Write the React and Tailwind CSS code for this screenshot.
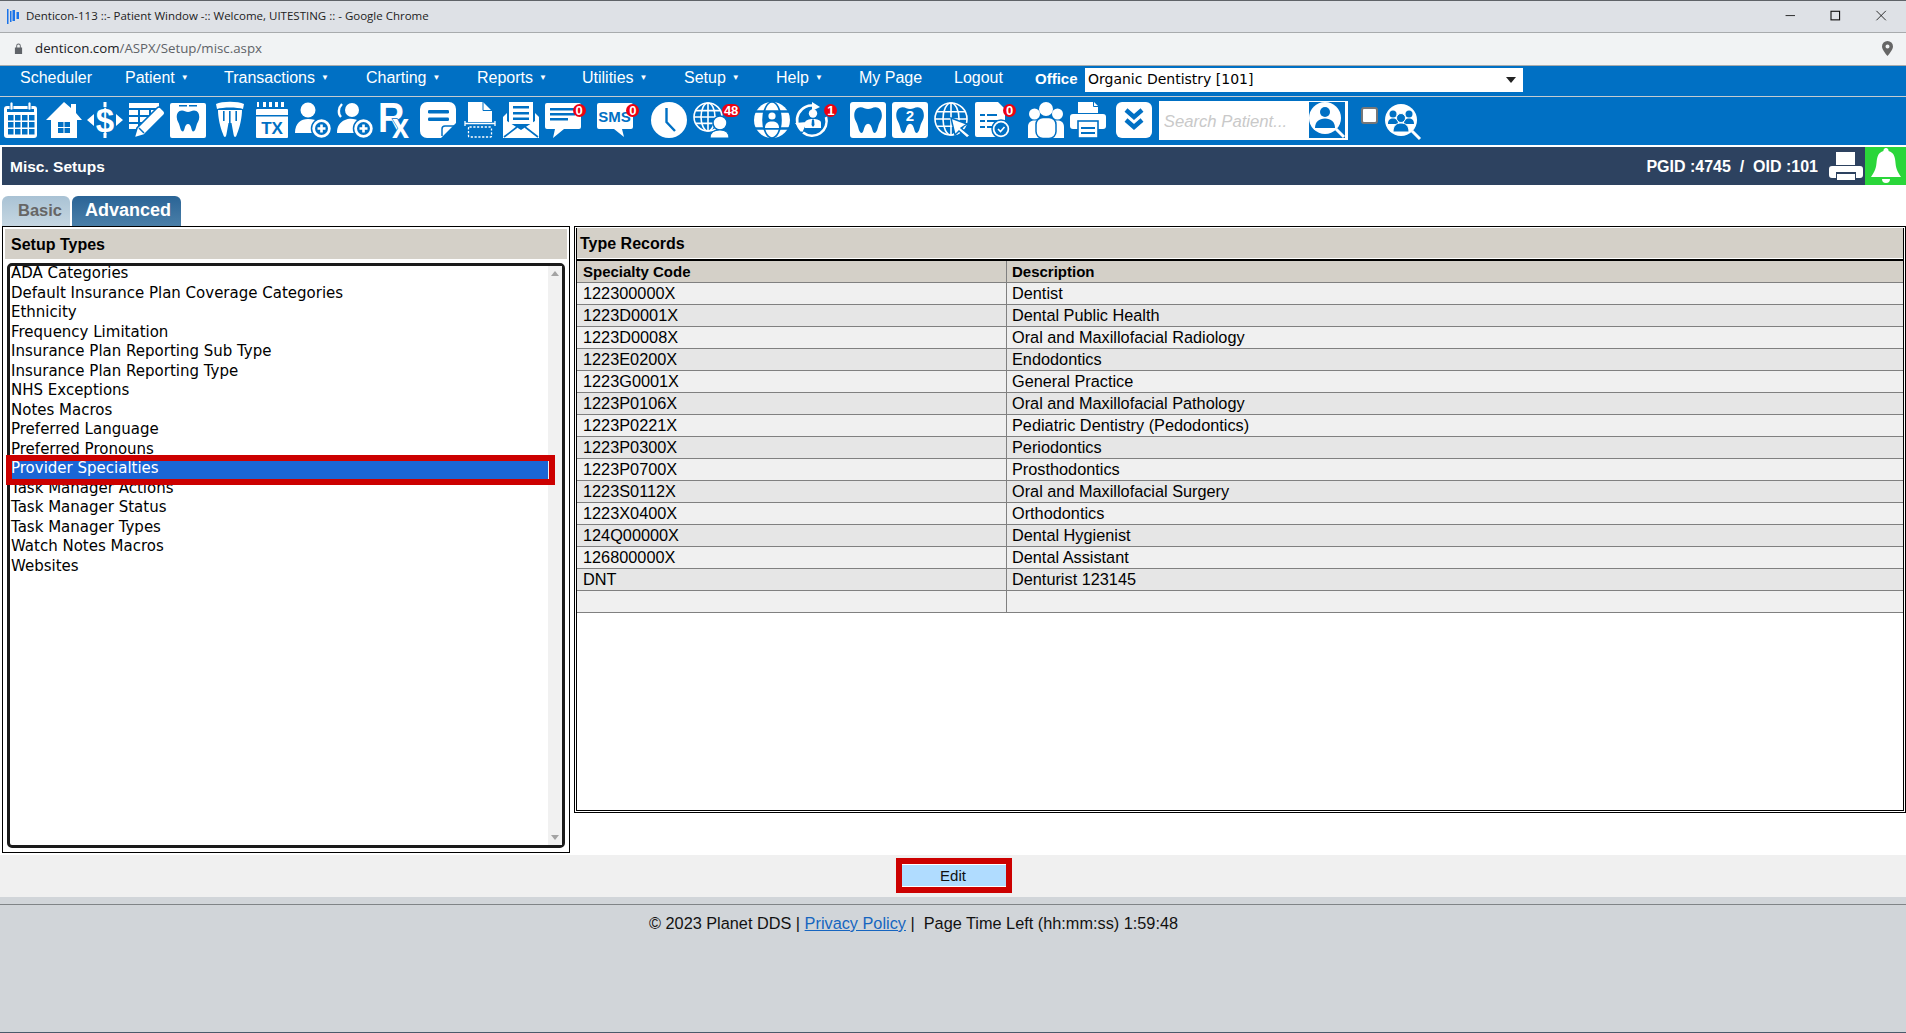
import { Fragment } from 'react'

const B = '#0070c4'
const SANS = { fontFamily: 'Liberation Sans, sans-serif' }
const TOOTH = 'M10 4C13 4 15 6 18 6C21 6 23 4 26 4C31 4 33 8 33 13C33 18 30 20 29 25C28 29 27 32 25 32C22 32 23 22 18 22C13 22 14 32 11 32C9 32 8 29 7 25C6 20 3 18 3 13C3 8 5 4 10 4Z'

const menu = [
  { label: 'Scheduler', w: 'w-[105px]' },
  { label: 'Patient', w: 'w-[99px]', arrow: true },
  { label: 'Transactions', w: 'w-[142px]', arrow: true },
  { label: 'Charting', w: 'w-[111px]', arrow: true },
  { label: 'Reports', w: 'w-[105px]', arrow: true },
  { label: 'Utilities', w: 'w-[102px]', arrow: true },
  { label: 'Setup', w: 'w-[92px]', arrow: true },
  { label: 'Help', w: 'w-[83px]', arrow: true },
  { label: 'My Page', w: 'w-[95px]' },
  { label: 'Logout', w: 'w-[81px]' },
]

const setupTypes = [
  'ADA Categories',
  'Default Insurance Plan Coverage Categories',
  'Ethnicity',
  'Frequency Limitation',
  'Insurance Plan Reporting Sub Type',
  'Insurance Plan Reporting Type',
  'NHS Exceptions',
  'Notes Macros',
  'Preferred Language',
  'Preferred Pronouns',
  'Provider Specialties',
  'Task Manager Actions',
  'Task Manager Status',
  'Task Manager Types',
  'Watch Notes Macros',
  'Websites',
]

const records = [
  ['122300000X', 'Dentist'],
  ['1223D0001X', 'Dental Public Health'],
  ['1223D0008X', 'Oral and Maxillofacial Radiology'],
  ['1223E0200X', 'Endodontics'],
  ['1223G0001X', 'General Practice'],
  ['1223P0106X', 'Oral and Maxillofacial Pathology'],
  ['1223P0221X', 'Pediatric Dentistry (Pedodontics)'],
  ['1223P0300X', 'Periodontics'],
  ['1223P0700X', 'Prosthodontics'],
  ['1223S0112X', 'Oral and Maxillofacial Surgery'],
  ['1223X0400X', 'Orthodontics'],
  ['124Q00000X', 'Dental Hygienist'],
  ['126800000X', 'Dental Assistant'],
  ['DNT', 'Denturist 123145'],
  ['\u00a0', '\u00a0'],
]

function Svg({ children }) {
  return <svg viewBox="0 0 36 36" className="w-9 h-9 overflow-visible" fill="#fff">{children}</svg>
}

function Tool({ className = '', badge, badgeClass = '', children }) {
  return (
    <div className={`relative w-9 h-9 shrink-0 ${className}`}>
      <Svg>{children}</Svg>
      {badge && (
        <span className={`absolute top-[2px] h-[13px] min-w-[13px] px-[2px] rounded-full bg-[#ee0010] text-white text-[13px] leading-[13px] font-bold text-center font-['Liberation_Sans',sans-serif] ${badgeClass}`}>
          {badge}
        </span>
      )}
    </div>
  )
}

function Globe({ cx = 15, cy = 15, r = 14 }) {
  return (
    <g fill="none" stroke="#fff" strokeWidth="1.6">
      <circle cx={cx} cy={cy} r={r} />
      <ellipse cx={cx} cy={cy} rx={r / 2} ry={r} />
      <path d={`M${cx} ${cy - r}V${cy + r}M${cx - r + 2} ${cy - r / 2.2}H${cx + r - 2}M${cx - r} ${cy}H${cx + r}M${cx - r + 2} ${cy + r / 2.2}H${cx + r - 2}`} />
    </g>
  )
}

function PlusBadge() {
  return (
    <g>
      <circle cx="26.5" cy="26.5" r="10" fill="#fff" stroke={B} strokeWidth="1.5" />
      <circle cx="26.5" cy="26.5" r="6.5" fill={B} />
      <path d="M25.2 22.5h2.6v2.7h2.7v2.6h-2.7v2.7h-2.6v-2.7h-2.7v-2.6h2.7z" />
    </g>
  )
}

function Toolbar() {
  return (
    <div className="h-[48px] flex items-center pl-[4px] pb-[2px] bg-[#0070c4] gap-[5.6px]">
      {/* calendar */}
      <Tool>
        <rect x="0" y="4" width="33" height="32" rx="3" />
        <rect x="3" y="7" width="27" height="3" fill={B} />
        {[4, 11, 18, 25].map((x) => [13, 20, 27].map((y) => <rect key={x + '-' + y} x={x} y={y} width="5.5" height="5.5" fill={B} />))}
        <rect x="6" y="0" width="3" height="8" rx="1.5" stroke={B} strokeWidth=".8" />
        <rect x="24" y="0" width="3" height="8" rx="1.5" stroke={B} strokeWidth=".8" />
      </Tool>
      {/* home */}
      <Tool>
        <path d="M18 0L25 6V2H30V11L36 18H31V36H5V18H0Z" />
        <path fill={B} d="M12 20h5.5v5H12zM18.5 20H24v5h-5.5zM12 26h5.5v5H12zM18.5 26H24v5h-5.5z" />
      </Tool>
      {/* dollar */}
      <Tool>
        <rect x="16.5" y="0" width="3" height="5" />
        <rect x="16.5" y="31" width="3" height="5" />
        <path d="M0 18L7 12V24ZM36 18L29 12V24Z" />
        <text x="18" y="29.5" textAnchor="middle" fontSize="33" fontWeight="700" style={SANS}>$</text>
      </Tool>
      {/* form + pencil */}
      <Tool>
        <path d="M0 1H30V6H0ZM0 8H9V13H0ZM11 8H20V13H11ZM22 8H30V13H22ZM0 15H9V20H0ZM11 15H20V20H11ZM0 22H9V27H0ZM11 22H14V27H11Z" />
        <path d="M5 36L8 26L28 6Q30 4 32 6L35 9Q37 11 35 13L15 33Z" stroke={B} strokeWidth="1.6" />
        <path d="M10 26L15 31" stroke={B} strokeWidth="1.5" />
      </Tool>
      {/* tooth card */}
      <Tool>
        <rect x="0" y="1" width="36" height="35" rx="2" />
        <path fill={B} d="M9 3h8v1.6H9zM19 3h8v1.6h-8z" />
        <path fill={B} transform="translate(4.5 5.5) scale(.75)" d={TOOTH} />
      </Tool>
      {/* crown tooth */}
      <Tool>
        <path d="M4 2C10 -1 26 -1 32 2L31 7C25 5 11 5 5 7Z" />
        <path d="M6 8H30C30 15 28 25 25 32C24 36 22 36 21.5 32L19.5 21H16.5L14.5 32C14 36 12 36 11 32C8 25 6 15 6 8Z" />
        <path fill={B} d="M11 9h1.6v10H11zM17 9h1.6v12H17zM23.4 9H25v10h-1.6z" />
      </Tool>
      {/* tx */}
      <Tool>
        <rect x="2" y="7" width="32" height="29" rx="1" />
        <path d="M3 0h2v5H3zM9 0h3v5H9zM15 0h3v5h-3zM21 0h3v5h-3zM27 0h3v5h-3z" />
        <rect x="2" y="13" width="32" height="1.5" fill={B} />
        <text x="18" y="31.5" textAnchor="middle" fontSize="17" fontWeight="700" fill={B} style={SANS}>TX</text>
      </Tool>
      {/* add patient */}
      <Tool>
        <circle cx="13" cy="8" r="7.5" />
        <path d="M0 31C0 21 6 17 13 17C18 17 21 18 24 20L17 31Z" />
        <PlusBadge />
      </Tool>
      {/* add patients */}
      <Tool>
        <path d="M5 2C1 6 1 12 4 15" fill="none" stroke="#fff" strokeWidth="2.4" />
        <circle cx="15" cy="8" r="7" />
        <path d="M0 31C0 24 3 20 8 18C12 16 18 16 24 20L17 31Z" />
        <PlusBadge />
      </Tool>
      {/* rx */}
      <Tool>
        <text x="0" y="30" fontSize="43" fontWeight="700" transform="scale(.85 1)" style={SANS}>
          R<tspan dx="-14.5" dy="6" fontSize="36" stroke={B} strokeWidth="1.4" paintOrder="stroke">x</tspan>
        </text>
      </Tool>
      {/* sticky note */}
      <Tool>
        <path d="M7 0H29A7 7 0 0 1 36 7V21L21 36H7A7 7 0 0 1 0 29V7A7 7 0 0 1 7 0Z" />
        <rect x="8" y="8" width="21" height="3.4" rx="1.2" fill={B} />
        <rect x="8" y="15.5" width="21" height="3.4" rx="1.2" fill={B} />
        <path d="M22 34V27A3 3 0 0 1 25 24H34" fill="none" stroke={B} strokeWidth="1.5" />
      </Tool>
      {/* scan doc */}
      <Tool>
        <path d="M6 0H21L30 9V20H6Z" />
        <path d="M21 0V8.500H30" fill="none" stroke={B} strokeWidth="1" />
        <path d="M3 19V24M3 21.5H33M33 19V24" fill="none" stroke="#fff" strokeWidth="1.3" />
        <rect x="6.500" y="25" width="23" height="10" rx="1" fill="none" stroke="#fff" strokeWidth="1.3" strokeDasharray="2.2 1.6" />
      </Tool>
      {/* mail */}
      <Tool>
        <path d="M6 0H30V22H6Z" />
        <path fill={B} d="M10 4h16v2.5H10zM10 10h16v2.5H10zM10 15.5h16v2.5H10z" />
        <path d="M0 15L4 11V19L18 28L32 19V11L36 15V36H0Z" />
        <path d="M1 35L14 25M35 35L22 25" stroke={B} strokeWidth="1.6" />
      </Tool>
      {/* messages */}
      <Tool badge="0" badgeClass="left-[28px]">
        <path d="M2 1H34A2 2 0 0 1 36 3V25A2 2 0 0 1 34 27H19L8 36L10 27H2A2 2 0 0 1 0 25V3A2 2 0 0 1 2 1Z" />
        <path fill={B} d="M5 6h25v2.5H5zM5 11h25v2.5H5zM5 16h18v2.5H5z" />
      </Tool>
      {/* sms */}
      <Tool className="ml-[11px]" badge="0" badgeClass="left-[29px]">
        <path d="M2 1H34A2 2 0 0 1 36 3V25A2 2 0 0 1 34 27H25L27 35L17 27H2A2 2 0 0 1 0 25V3A2 2 0 0 1 2 1Z" />
        <text x="17.5" y="20" textAnchor="middle" fontSize="15" fontWeight="700" fill={B} style={SANS}>SMS</text>
      </Tool>
      {/* clock */}
      <Tool className="ml-[12.4px]">
        <circle cx="18" cy="18" r="18" />
        <path d="M15.5 6V20L24 29" fill="none" stroke={B} strokeWidth="2.4" />
      </Tool>
      {/* globe patient */}
      <Tool badge="48" badgeClass="left-[29px]">
        <Globe />
        <circle cx="27" cy="21" r="7" stroke={B} strokeWidth="1.5" />
        <path d="M17 36C17 30 22 28 27 28C32 28 36 30 36 36Z" stroke={B} strokeWidth="1.2" />
      </Tool>
      {/* web person */}
      <Tool className="ml-[19.4px]">
        <circle cx="18" cy="18" r="18" />
        <ellipse cx="18" cy="18" rx="9" ry="18" fill="none" stroke={B} strokeWidth="1.6" />
        <path d="M1 9.5H35M1 26.5H35" stroke={B} strokeWidth="2.4" />
        <rect x="9" y="9" width="18" height="18" fill={B} />
        <circle cx="18" cy="14" r="3.6" />
        <path d="M11 26C11 21 14 19.5 18 19.5C22 19.5 25 21 25 26Z" />
      </Tool>
      {/* person refresh */}
      <Tool badge="1" badgeClass="left-[29px]">
        <path d="M7 29A14.5 14.5 0 0 1 20 4M8 30.5A14.5 14.5 0 0 0 31 15" fill="none" stroke="#fff" strokeWidth="2.6" />
        <path d="M0 21L12 20L7.5 30ZM17 0L25 5L17 9Z" />
        <circle cx="18" cy="11.5" r="4.2" />
        <path d="M10 26V21C10 18 14 17 18 17C22 17 26 18 26 21V26Z" />
        <path fill={B} d="M17 17.5h2L19.5 23L18 25L16.500 23Z" />
      </Tool>
      {/* tooth */}
      <Tool className="ml-[13.4px]">
        <rect width="36" height="36" rx="3" />
        <path fill={B} transform="translate(1.5 1.5) scale(.92)" d={TOOTH} />
      </Tool>
      {/* tooth 2 */}
      <Tool>
        <rect width="36" height="36" rx="3" />
        <path fill={B} transform="translate(1.5 1.5) scale(.92)" d={TOOTH} />
        <text x="18" y="19" textAnchor="middle" fontSize="15" fontWeight="700" style={SANS}>2</text>
      </Tool>
      {/* globe arrow */}
      <Tool>
        <Globe cx={17} cy={17} r={16} />
        <path d="M17 16L33 22L27 26L36 33.500L33 36L25 29L21 33Z" stroke={B} strokeWidth="1.4" />
      </Tool>
      {/* doc check */}
      <Tool badge="0" badgeClass="left-[28px]">
        <path d="M2 0H23L30 7V35H2A2 2 0 0 1 0 33V2A2 2 0 0 1 2 0Z" />
        <path fill={B} d="M5 12h5v2H5zM12 12h10v2H12zM5 18h5v2H5zM12 18h10v2H12zM5 24h5v2H5zM12 24h5v2h-5z" />
        <circle cx="26" cy="27" r="9" stroke={B} strokeWidth="1.5" />
        <circle cx="26" cy="27" r="6.5" fill={B} />
        <path d="M23 27L25.500 29.500L29.500 25" fill="none" stroke="#fff" strokeWidth="1.6" />
      </Tool>
      {/* family */}
      <Tool className="ml-[11.4px]">
        <circle cx="6.500" cy="12" r="5.5" />
        <circle cx="29.500" cy="12" r="5.500" />
        <circle cx="18" cy="7" r="7" />
        <path d="M0 36V25C0 20 3 18.500 7 18.500C11 18.500 14 20 14 25V36ZM22 36V25C22 20 25 18.500 29 18.500C33 18.500 36 20 36 25V36Z" />
        <rect x="8" y="15.500" width="20" height="21" rx="7" stroke={B} strokeWidth="1.500" />
      </Tool>
      {/* printer */}
      <Tool>
        <path d="M8 0H24L28 4V11H8Z" />
        <path d="M23.500 0V4.500H28" fill="none" stroke={B} strokeWidth="1" />
        <path d="M3 12H33A3 3 0 0 1 36 15V24A3 3 0 0 1 33 27H3A3 3 0 0 1 0 24V15A3 3 0 0 1 3 12Z" />
        <rect x="8" y="19" width="20" height="17" stroke={B} strokeWidth="1.600" />
        <path fill={B} d="M11 25h14v2H11zM11 30h14v2H11z" />
      </Tool>
      {/* collapse */}
      <Tool className="ml-[4.400px]">
        <rect width="36" height="36" rx="6" />
        <path d="M10 8L18 15L26 8M10 18L18 25L26 18" fill="none" stroke={B} strokeWidth="4.400" />
      </Tool>
      <div className="ml-[1.400px] w-[189px] h-[39px] bg-white flex items-center pl-[5px] pr-[3px] shrink-0">
        <input
          placeholder="Search Patient..."
          className="w-[145px] min-w-0 mt-[3px] bg-transparent italic text-[16.7px] font-['Liberation_Sans',sans-serif] placeholder:text-[#c9c9c9] outline-none"
        />
        <div className="w-9 h-9 bg-[#0070c4] shrink-0">
          <Svg>
            <circle cx="16" cy="16" r="16" />
            <path d="M27 27L35 35" stroke="#fff" strokeWidth="3" />
            <circle cx="16" cy="10" r="5" fill={B} />
            <path d="M6 26C6 20 10 16.500 16 16.500C22 16.500 26 20 26 26Z" fill={B} />
          </Svg>
        </div>
      </div>
      <input type="checkbox" className="ml-[7.400px] -mt-[9px] appearance-none w-[17px] h-[17px] bg-white border-2 border-[#777] rounded-[3px] shrink-0" />
      <div className="ml-[1.400px] w-9 h-9 mt-[4px] shrink-0">
        <Svg>
          <circle cx="16" cy="16" r="16" />
          <path d="M27 27L35 35" stroke="#fff" strokeWidth="3" />
          <g fill={B}>
            <circle cx="8" cy="10" r="3.500" />
            <circle cx="24" cy="10" r="3.500" />
            <path d="M3 20C3 16 5 14.500 8 14.500C11 14.500 13 16 13 20ZM19 20C19 16 21 14.500 24 14.500C27 14.500 29 16 29 20Z" />
            <circle cx="16" cy="14" r="4.500" stroke="#fff" />
            <path d="M8 28C8 22 11 19 16 19C21 19 24 22 24 28Z" stroke="#fff" />
          </g>
        </Svg>
      </div>
    </div>
  )
}

export default function App() {
  return (
    <div className="w-[1906px] h-[1033px] overflow-hidden bg-white flex flex-col font-['Liberation_Sans',sans-serif] text-black">
      {/* browser chrome */}
      <div className="h-[32px] bg-[#dee1e6] border-t border-[#5f6368] border-b-0 flex items-center pl-[7px] shrink-0 relative">
        <svg viewBox="0 0 12 15" className="w-3 h-[15px] -mt-[1px]">
          <path d="M0 0h1.500v15H0zM3 2h1.500v11H3zM5.500 1H8v11H5.500zM9.500 3H12v7H9.500z" fill="#1a73e8" />
        </svg>
        <span className="ml-[7px] -mt-[2px] text-[11.5px] text-[#222] font-['Open_Sans',sans-serif]">Denticon-113 ::- Patient Window -:: Welcome, UITESTING :: - Google Chrome</span>
        <svg viewBox="0 0 120 14" className="absolute right-[17px] top-[9px] w-[104px] h-[12px] overflow-visible" fill="none" stroke="#111" strokeWidth="1">
          <path d="M0 6.500H11" />
          <rect x="53" y="1.500" width="10" height="10" strokeWidth="1.300" />
          <path d="M106 1L117 12M117 1L106 12" />
        </svg>
      </div>
      <div className="h-[34px] bg-[#f1f3f4] border-y border-[#a8abad] flex items-center pl-[14px] pr-[13px] pb-[1px] shrink-0 font-['Open_Sans',sans-serif] text-[13.3px] text-[#5f6368]">
        <svg viewBox="0 0 10 12" className="w-[9px] h-[11px]" fill="#5f6368">
          <path d="M1 5h8v7H1zM2.500 5V3a2.500 2.500 0 0 1 5 0v2H6.500V3a1.500 1.500 0 0 0-3 0v2z" />
        </svg>
        <span className="ml-[12px]"><span className="text-[#202124]">denticon.com</span>/ASPX/Setup/misc.aspx</span>
        <svg viewBox="0 0 11 15" className="ml-auto w-[11px] h-[15px]" fill="#666">
          <path fillRule="evenodd" d="M5.500 0A5.500 5.500 0 0 1 11 5.500C11 9 5.500 15 5.500 15S0 9 0 5.500A5.500 5.500 0 0 1 5.500 0ZM5.500 3.500a2 2 0 1 0 0 4a2 2 0 0 0 0-4Z" />
        </svg>
      </div>

      {/* app menu */}
      <div className="h-[31px] bg-[#0070c4] border-b border-[#c4ccd2] flex items-center pl-[20px] shrink-0 text-white text-[16px]">
        {menu.map((m) => (
          <div key={m.label} className={`${m.w} flex items-center -mt-[6px]`}>
            {m.label}
            {m.arrow && <span className="ml-[6px] text-[8px]">▼</span>}
          </div>
        ))}
        <span className="font-bold text-[15px] w-[50px] -mt-[3px]">Office</span>
        <div className="w-[438px] h-[24px] -mt-[3px] bg-white flex items-center justify-between pl-[3px] pr-[7px] text-black text-[14px] font-['DejaVu_Sans',sans-serif]">
          Organic Dentistry [101]
          <span className="w-0 h-0 border-x-[5px] border-x-transparent border-t-[6px] border-t-[#222]" />
        </div>
      </div>
      <Toolbar />
      <div className="h-[2px] bg-white shrink-0" />

      {/* page title */}
      <div className="h-[38px] ml-[2px] bg-[#2d4260] flex items-center justify-between pl-[8px] text-white font-bold text-[16px] shrink-0">
        <span className="text-[15.5px] mt-[1px]">Misc. Setups</span>
        <div className="flex items-center h-full">
          <span className="whitespace-pre mt-[1px]">PGID :4745  /  OID :101</span>
          <svg viewBox="0 0 34 28" className="ml-[11px] w-[34px] h-[28px]" fill="#fff">
            <path d="M7 0H26V13H7ZM3 14H31A3 3 0 0 1 34 17V23A3 3 0 0 1 31 26H27V20H7V26H3A3 3 0 0 1 0 23V17A3 3 0 0 1 3 14ZM8 22H26V28H8Z" />
          </svg>
          <div className="ml-[2px] w-[41px] h-full bg-[#2ad63a] flex items-center justify-center">
            <svg viewBox="0 0 30 36" className="w-[30px] h-[36px]" fill="#fff">
              <path d="M15 0A2.500 2.500 0 0 1 17.500 3C23 4.500 24 9 24.500 15C25 22 28 26 30 29H0C2 26 5 22 5.500 15C6 9 7 4.500 12.500 3A2.500 2.500 0 0 1 15 0ZM11 31H19A4 4 0 0 1 11 31Z" />
            </svg>
          </div>
        </div>
      </div>

      {/* tabs */}
      <div className="h-[41px] pt-[11px] pl-[2px] flex gap-[2px] items-stretch font-bold text-[18px] shrink-0">
        <div className="w-[68px] pl-[8px] pb-[2px] text-[16.5px] rounded-t-[6px] bg-linear-to-b from-[#a9c2d4] to-[#c6d7e2] text-[#666] flex items-center justify-center">Basic</div>
        <div className="w-[109px] pl-[3px] pb-[2px] rounded-t-[6px] bg-linear-to-b from-[#2a6496] to-[#4a7fa8] text-white flex items-center justify-center">Advanced</div>
      </div>

      {/* panels */}
      <div className="h-[627px] flex shrink-0 pl-[2px]">
        <div className="w-[568px] border border-black p-[2px] flex flex-col">
          <div className="h-[30px] pt-[1px] bg-[#d4d0c8] pl-[6px] flex items-center text-[16px] font-bold shrink-0">Setup Types</div>
          <div className="mt-[4px] mx-[2px] mb-[2px] flex-1 min-h-0 border-[3px] border-[#1a1a1a] rounded-[5px] bg-white flex">
            <div className="flex-1 min-w-0 -mt-[2px] text-[15px] font-['DejaVu_Sans',sans-serif]">
              {setupTypes.map((t) => {
                const selected = t === 'Provider Specialties'
                return (
                  <div key={t} className={`relative h-[19.5px] leading-[19.5px] pl-[1px] whitespace-nowrap ${selected ? 'bg-[#1a66d6] text-white' : ''}`}>
                    {t}
                    {selected && <div className="absolute z-10 -left-[4px] -right-[7px] -top-[4px] -bottom-[6px] border-[6px] border-[#cc0000]" />}
                  </div>
                )
              })}
            </div>
            <div className="w-[14px] bg-[#f1f1f1] flex flex-col justify-between items-center py-[5px] shrink-0">
              <span className="w-0 h-0 border-x-[4px] border-x-transparent border-b-[5px] border-b-[#a3a3a3]" />
              <span className="w-0 h-0 border-x-[4px] border-x-transparent border-t-[5px] border-t-[#a3a3a3]" />
            </div>
          </div>
        </div>

        <div className="ml-[4px] flex-1 h-[587px] border-[3px] border-double border-black flex flex-col">
          <div className="h-[30px] -mt-[1px] pt-[1px] bg-[#d4d0c8] pl-[3px] flex items-center text-[16px] font-bold shrink-0">Type Records</div>
          <div className="mt-[1px] border-t-2 border-black grid grid-cols-[430px_1fr] text-[16.3px]">
            <div className="h-[22px] leading-[21px] pl-[6px] bg-[#d4d0c8] border-b border-[#808080] border-r font-bold text-[15px]">Specialty Code</div>
            <div className="h-[22px] leading-[21px] pl-[5px] bg-[#d4d0c8] border-b border-[#808080] font-bold text-[15px]">Description</div>
            {records.map((r, i) => (
              <Fragment key={i}>
                <div className={`h-[22px] leading-[21px] pl-[6px] border-b border-r border-[#808080] ${i % 2 ? 'bg-[#e6e6e6]' : 'bg-[#f0f0f0]'}`}>{r[0]}</div>
                <div className={`h-[22px] leading-[21px] pl-[5px] border-b border-[#808080] ${i % 2 ? 'bg-[#e6e6e6]' : 'bg-[#f0f0f0]'}`}>{r[1]}</div>
              </Fragment>
            ))}
          </div>
        </div>
      </div>

      {/* action strip */}
      <div className="mt-[2px] h-[42px] bg-[#f0f0f0] flex justify-center pt-[3px] pl-[2px] shrink-0">
        <div className="w-[116px] h-[35px] border-[6px] border-[#cc0000]">
          <button className="w-full h-full pr-[2px] bg-[#b0dcff] border-y border-white text-[15px] text-[#111]">Edit</button>
        </div>
      </div>

      {/* footer */}
      <div className="flex-1 bg-[#d1d5d9] pt-[7px] border-b border-[#4a5a6a]">
        <div className="border-t border-[#808487] pt-[8px] pl-[649px] text-[16.3px] whitespace-pre leading-[20px] text-[#111]">
          © 2023 Planet DDS | <a className="text-[#1565c0] underline">Privacy Policy</a> |  Page Time Left (hh:mm:ss) 1:59:48
        </div>
      </div>
    </div>
  )
}
